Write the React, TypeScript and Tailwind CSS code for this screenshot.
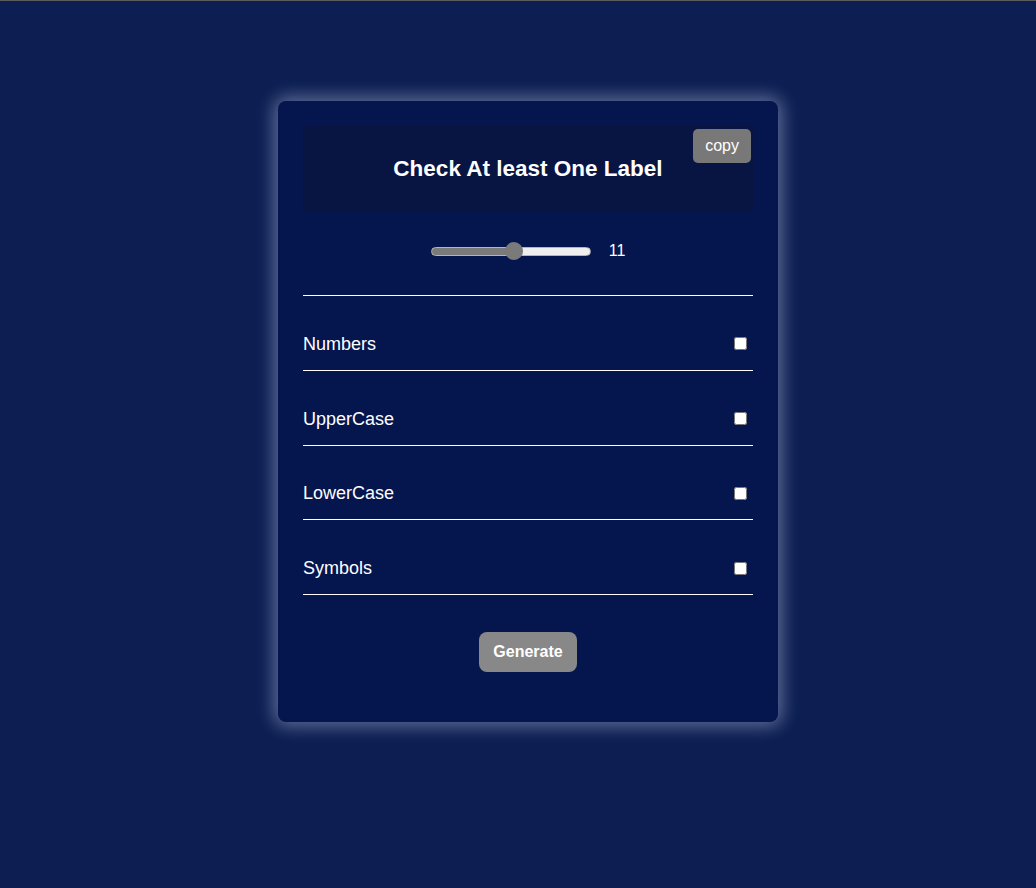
import { useState } from "react";

const options = ["Numbers", "UpperCase", "LowerCase", "Symbols"];

const MIN = 1;
const MAX = 20;

export default function App() {
  const [length, setLength] = useState(11);
  const [checked, setChecked] = useState<Record<string, boolean>>({});

  // fill the track up to the thumb centre (160px track, 18px thumb)
  const fill = 9 + ((length - MIN) / (MAX - MIN)) * 142;

  return (
    <div className="min-h-[888px] border-t border-[#5c5c5c] bg-[#0c1e52] pl-5 pt-[100px] font-['Liberation_Sans',Arial,sans-serif] text-white">
      <div className="mx-auto w-[500px] rounded-lg bg-[#05154e] px-[25px] pb-[50px] pt-[25px] shadow-[0_0_18px_4px_rgba(200,210,240,0.45)]">
        <div className="relative flex h-[86px] items-center justify-center rounded bg-[#081543]">
          <h1 className="text-[22.5px] font-bold">Check At least One Label</h1>
          <button className="absolute right-[2px] top-[3px] h-[34px] rounded-[5px] bg-[#787878] px-3 text-base">
            copy
          </button>
        </div>

        <div className="mt-[29px] flex h-5 items-center justify-center gap-[18px]">
          <input
            type="range"
            min={MIN}
            max={MAX}
            value={length}
            onChange={(e) => setLength(Number(e.target.value))}
            style={{
              background: `linear-gradient(to right, #7a7a7a ${fill}px, #efefef ${fill}px)`,
            }}
            className="h-[9px] w-[160px] appearance-none rounded-full border border-[#b5b5b5] outline-none [&::-webkit-slider-thumb]:h-[18px] [&::-webkit-slider-thumb]:w-[18px] [&::-webkit-slider-thumb]:appearance-none [&::-webkit-slider-thumb]:rounded-full [&::-webkit-slider-thumb]:bg-[#7a7a7a]"
          />
          <span className="text-base">{length}</span>
        </div>

        <div className="mt-[34px] border-t border-white">
          {options.map((label) => (
            <label
              key={label}
              className="flex items-center justify-between border-b border-white pb-[16px] pt-[37.75px] text-lg leading-[20px]"
            >
              <span>{label}</span>
              <input
                type="checkbox"
                checked={!!checked[label]}
                onChange={(e) => setChecked({ ...checked, [label]: e.target.checked })}
                className="mr-[6px] h-[13px] w-[13px]"
              />
            </label>
          ))}
        </div>

        <div className="mt-[37px] flex justify-center">
          <button className="h-10 w-[98px] rounded-lg bg-[#888888] text-base font-bold leading-none">
            Generate
          </button>
        </div>
      </div>
    </div>
  );
}
